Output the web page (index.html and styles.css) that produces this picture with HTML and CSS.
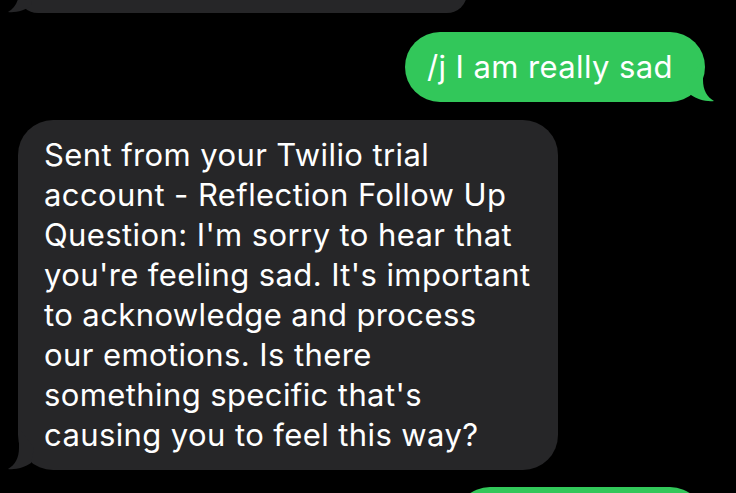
FILE: index.html
```html
<!DOCTYPE html>
<html>
<head>
<meta charset="utf-8">
<link rel="stylesheet" href="styles.css">
</head>
<body>
<div class="thread">
  <div class="bubble gray prev">
    <svg class="tail tail-left" viewBox="0 0 32 44" width="32" height="44"><path d="M13,0 L13,20 C13,30 9,37 2,41 C10,42 19,39 25,35 L28,20 Z"/></svg>
  </div>
  <div class="bubble green sent">/j I am really sad
    <svg class="tail tail-right" viewBox="0 0 32 44" width="32" height="44"><path d="M19,0 L19,20 C19,30 23,37 30,41 C22,42 13,39 7,35 L4,20 Z"/></svg>
  </div>
  <div class="bubble gray reply">Sent from your Twilio trial<br>account - Reflection Follow Up<br>Question: I'm sorry to hear that<br>you're feeling sad. It's important<br>to acknowledge and process<br>our emotions. Is there<br>something specific that's<br>causing you to feel this way?
    <svg class="tail tail-left" viewBox="0 0 32 44" width="32" height="44"><path d="M13,0 L13,20 C13,30 9,37 2,41 C10,42 19,39 25,35 L28,20 Z"/></svg>
  </div>
  <div class="bubble green next"></div>
</div>
</body>
</html>
```
FILE: styles.css
```css
html, body {
  margin: 0;
  padding: 0;
  background: #000;
  width: 736px;
  height: 493px;
  overflow: hidden;
}
.thread {
  display: flex;
  flex-direction: column;
  align-items: flex-start;
  height: 493px;
  overflow: hidden;
  font-family: Inter, "Liberation Sans", sans-serif;
  font-size: 31px;
  letter-spacing: 0.4px;
  line-height: 40px;
  color: #fff;
}
.bubble {
  position: relative;
  flex-shrink: 0;
  box-sizing: border-box;
  border-radius: 35px;
}
.gray { background: #262628; }
.green { background: #32c75a; }
.gray .tail { fill: #262628; }
.green .tail { fill: #32c75a; }
.tail {
  position: absolute;
}
.tail-left { left: -12px; bottom: -2px; }
.tail-right { right: -11px; bottom: -2px; }
.prev {
  margin-top: -27px;
  margin-left: 18px;
  width: 449px;
  height: 40px;
}
.sent {
  margin-top: 19px;
  margin-left: 405px;
  width: 300px;
  height: 70px;
  padding: 15px 22px;
  white-space: nowrap;
}
.reply {
  margin-top: 18px;
  margin-left: 18px;
  width: 540px;
  padding: 15px 26px;
  white-space: nowrap;
}
.next {
  margin-top: 17px;
  margin-left: 455px;
  width: 250px;
  height: 70px;
}
```
